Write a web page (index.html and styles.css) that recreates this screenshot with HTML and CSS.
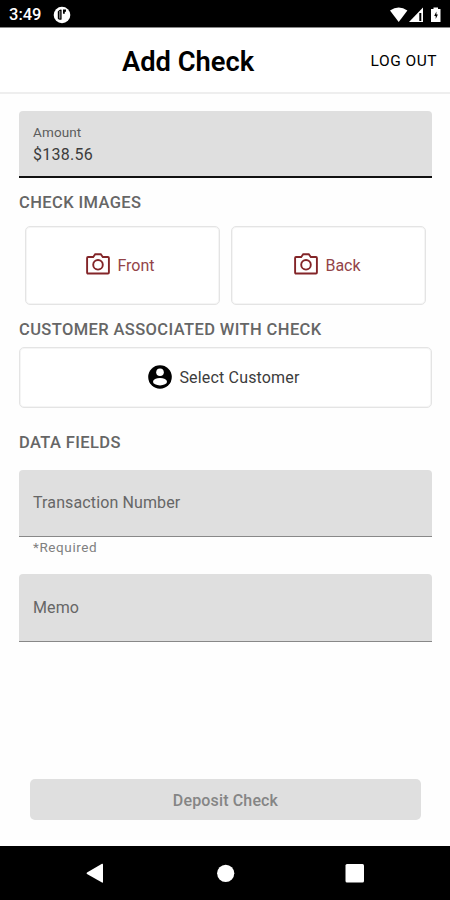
FILE: index.html
```html
<!DOCTYPE html>
<html lang="en">
<head>
<meta charset="utf-8">
<title>Add Check</title>
<link rel="stylesheet" href="styles.css">
</head>
<body>
<div class="status">
  <span class="time">3:49</span>
  <svg class="app-dot" viewBox="0 0 18 18"><circle cx="9" cy="9" r="8.3" fill="#fff"/><path d="M4.800 5.500Q7 3 8.600 3.800V13.500Q6 14.500 4.800 12.500ZM10 3.600h3v2.200h-1.200v2H10Z" fill="#000"/><path d="M6.800 5v7.500" stroke="#aaa"/></svg>
  <svg class="signals" viewBox="0 0 54 18" fill="#fff"><path d="M1 4.600Q9.700 -1.800 18.400 4.600L9.700 16Z"/><path d="M34 1.500V16H20Z"/><path d="M30.300 7h2v8h-2Z" fill="#000"/><path d="M44.500 1.500h4.500v1.500h2.500v13h-9.500V3h2.500Z"/><path d="M47.400 5.500l-2.200 4.500h1.500v3l2.200-4.500h-1.500Z" fill="#000"/></svg>
</div>
<header class="bar"><h1>Add Check</h1><span class="logout">LOG OUT</span></header>
<main>
  <div class="field amount"><span class="label">Amount</span><span class="value">$138.56</span></div>
  <h2 class="h-images">CHECK IMAGES</h2>
  <div class="images">
    <div class="card"><svg class="camera" viewBox="0 0 24 22"><path d="M2 4h5.200l2-2.700h5.600l2 2.700H22q.9 0 .9.900v14.700q0 .9-.9.900H2q-.9 0-.9-.9V4.900Q1.100 4 2 4Z"/><circle cx="12" cy="11.800" r="4.800"/></svg><span>Front</span></div>
    <div class="card back"><svg class="camera" viewBox="0 0 24 22"><path d="M2 4h5.200l2-2.700h5.600l2 2.700H22q.9 0 .9.900v14.700q0 .9-.9.900H2q-.9 0-.9-.9V4.900Q1.100 4 2 4Z"/><circle cx="12" cy="11.800" r="4.800"/></svg><span>Back</span></div>
  </div>
  <h2 class="h-customer">CUSTOMER ASSOCIATED WITH CHECK</h2>
  <div class="card customer"><svg class="person" viewBox="0 0 24 24"><circle cx="12" cy="12" r="11.800"/><circle cx="12" cy="7.300" r="3.800" fill="#fff"/><ellipse cx="12" cy="16.700" rx="7" ry="3.700" fill="#fff"/></svg><span>Select Customer</span></div>
  <h2 class="h-data">DATA FIELDS</h2>
  <div class="field empty"><span>Transaction Number</span></div>
  <div class="required">*Required</div>
  <div class="field empty memo"><span>Memo</span></div>
  <div class="deposit"><span>Deposit Check</span></div>
</main>
<nav>
  <svg viewBox="0 0 450 54" fill="#fff"><path d="M87 26.500L102 17.800Q103 17.500 103 18.500V36Q103 37 102 36.500L87 28Q86 27.200 87 26.500Z"/><circle cx="225.700" cy="27.300" r="8.600"/><rect x="345.500" y="18" width="18.500" height="18.500" rx="1.500"/></svg>
</nav>
</body>
</html>
```

FILE: styles.css
```css
* { box-sizing: border-box; }
body { margin: 0; width: 450px; height: 900px; display: flex; flex-direction: column; background: #fefefe; font-family: Roboto, sans-serif; color: #000; overflow: hidden; }
svg { display: block; flex: none; }
.status { height: 28px; flex: none; background: #000; display: flex; align-items: center; padding: 2px 7px 0 9px; border-bottom: 1px solid #888; }
.time { color: #fff; font-size: 16.500px; font-weight: 500; line-height: 20px; width: 44px; }
.app-dot { width: 18px; height: 18px; }
.signals { width: 54px; height: 18px; margin-left: auto; }
.bar { height: 66px; flex: none; border-bottom: 2px solid #eeeeee; display: grid; grid-template-columns: 1fr auto; align-items: center; padding: 2px 13px 0 122px; background: #fff; }
h1 { margin: 0; font-size: 27.300px; line-height: 32px; font-weight: 600; padding-top: 2px; white-space: nowrap; }
.logout { font-size: 15.500px; line-height: 20px; letter-spacing: .5px; }
main { flex: 1; padding: 17px 18px 0 19px; display: flex; flex-direction: column; min-height: 0; }
.field { height: 67px; flex: none; background: #dfdfdf; border-radius: 4px 4px 0 0; padding: 0 14px; display: flex; flex-direction: column; justify-content: center; border-bottom: 1px solid #888; color: #666; font-size: 16px; letter-spacing: .12px; line-height: 20px; }
.amount { border-bottom: 2px solid #111; justify-content: flex-start; padding-top: 11px; }
.label { font-size: 13.500px; line-height: 20px; color: #5c5c5c; }
.value { color: #3c3c3c; line-height: 25px; letter-spacing: .25px; }
h2 { margin: 0; font-size: 16.500px; line-height: 20px; font-weight: 500; letter-spacing: .39px; color: #666; white-space: nowrap; }
.h-images { margin-top: 15px; }
.images { display: grid; grid-template-columns: 1fr 1fr; gap: 11px; margin: 13px 6px 0 6px; }
.card { height: 79px; border: 1px solid #e4e4e4; box-shadow: inset 0 0 0 1px #f5f5f5; border-radius: 5px; background: #fff; display: flex; align-items: center; justify-content: center; gap: 7px; color: #934448; font-size: 16px; padding-right: 4px; }
.back { padding-right: 2px; }
.camera { width: 24px; height: 22px; fill: none; stroke: #832528; stroke-width: 1.900; margin-top: -3px; }
.h-customer { margin-top: 15px; }
.customer { height: 61px; flex: none; margin-top: 7px; color: #3c3c3c; letter-spacing: .17px; padding-right: 3px; }
.person { width: 24px; height: 24px; fill: #000; margin-top: -1px; }
.h-data { margin-top: 25px; }
.empty { margin-top: 17px; }
.memo { height: 68px; }
.required { height: 20px; line-height: 20px; padding-left: 14px; font-size: 13.500px; letter-spacing: .6px; color: #808080; }
.deposit { height: 41px; flex: none; margin: 137px 11px 0; padding-top: 2px; border-radius: 5px; background: #dfdfdf; display: flex; align-items: center; justify-content: center; color: #858585; font-size: 16px; letter-spacing: .15px; font-weight: 500; }
nav { height: 54px; flex: none; background: #000; }
```
